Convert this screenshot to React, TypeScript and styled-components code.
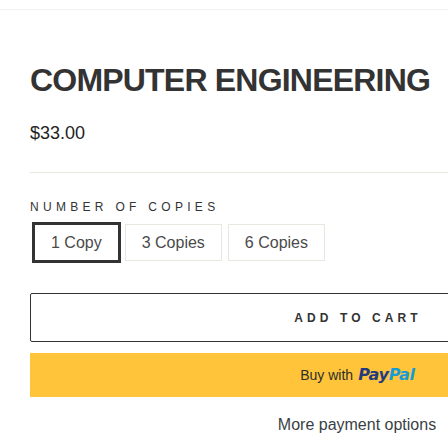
import React, { useState } from "react";
import styled, { createGlobalStyle } from "styled-components";

const Global = createGlobalStyle`
  html, body {
    margin: 0;
    padding: 0;
    background: #ffffff;
    overflow: hidden;
  }
  body {
    font-family: "Liberation Sans", Arial, Helvetica, sans-serif;
    color: #333333;
  }
  * { box-sizing: border-box; }
`;

const TopBar = styled.div`
  height: 10px;
  border-bottom: 1px solid #f0f0ee;
`;

const Product = styled.section`
  width: 684px;
  padding-left: 30px;
`;

const Title = styled.h1`
  margin: 52px 0 0;
  font-size: 32px;
  line-height: 36px;
  font-weight: 700;
  letter-spacing: -0.8px;
  color: #333333;
  white-space: nowrap;
`;

const Price = styled.div`
  margin-top: 23px;
  font-size: 18px;
  line-height: 24px;
  color: #222222;
`;

const Divider = styled.hr`
  margin: 27px 0 0;
  border: 0;
  border-top: 1px solid #e8e8e1;
`;

const OptionLabel = styled.div`
  margin-top: 26px;
  font-size: 12px;
  line-height: 16px;
  letter-spacing: 4.3px;
  text-transform: uppercase;
  color: #333333;
`;

const Options = styled.div`
  display: flex;
  gap: 6px;
  margin-top: 9px;
  padding-left: 4px;
`;

const Option = styled.button<{ $selected: boolean }>`
  height: 37px;
  padding: 0 16px;
  font-family: inherit;
  font-size: 16px;
  line-height: 35px;
  color: #4a4a4a;
  background: #ffffff;
  border: 1px solid ${(p) => (p.$selected ? "#333333" : "#e8e8e1")};
  box-shadow: ${(p) => (p.$selected ? "0 0 0 2px #333333" : "none")};
  border-radius: 0;
  cursor: pointer;
`;

const CartButton = styled.button`
  display: flex;
  align-items: center;
  justify-content: center;
  width: 656px;
  height: 49px;
  margin-top: 32px;
  border: 1px solid #333333;
  border-radius: 2px;
  background: #ffffff;
  font-family: inherit;
  font-size: 12px;
  line-height: 16px;
  font-weight: 700;
  letter-spacing: 4.1px;
  color: #333333;
  cursor: pointer;
`;

const PayPalButton = styled.button`
  display: flex;
  align-items: baseline;
  justify-content: center;
  gap: 5px;
  width: 655px;
  height: 44px;
  margin-top: 11px;
  padding-top: 12px;
  border: 0;
  background: #ffc439;
  cursor: pointer;
`;

const BuyWith = styled.span`
  font-family: "Liberation Sans", Arial, sans-serif;
  font-size: 14px;
  color: #2c2e2f;
`;

const PayPalLogo = styled.span`
  font-family: "DejaVu Sans", Verdana, sans-serif;
  font-size: 16px;
  font-weight: 700;
  font-style: italic;
  letter-spacing: -0.3px;
`;

const LogoPart = styled.span<{ $tone: string }>`
  color: ${(p) => p.$tone};
`;

const MoreOptions = styled.div`
  width: 654px;
  margin-top: 18px;
  text-align: center;
  font-size: 16px;
  line-height: 20px;
  color: #3a3f44;
`;

const copies = ["1 Copy", "3 Copies", "6 Copies"];

export default function App() {
  const [selected, setSelected] = useState(0);
  return (
    <>
      <Global />
      <TopBar />
      <Product>
        <Title>COMPUTER ENGINEERING</Title>
        <Price>$33.00</Price>
        <Divider />
        <OptionLabel>Number of Copies</OptionLabel>
        <Options>
          {copies.map((c, i) => (
            <Option key={c} $selected={i === selected} onClick={() => setSelected(i)}>
              {c}
            </Option>
          ))}
        </Options>
        <CartButton>ADD TO CART</CartButton>
        <PayPalButton>
          <BuyWith>Buy with</BuyWith>
          <PayPalLogo>
            <LogoPart $tone="#253b80">Pay</LogoPart>
            <LogoPart $tone="#179bd7">Pal</LogoPart>
          </PayPalLogo>
        </PayPalButton>
        <MoreOptions>More payment options</MoreOptions>
      </Product>
    </>
  );
}
